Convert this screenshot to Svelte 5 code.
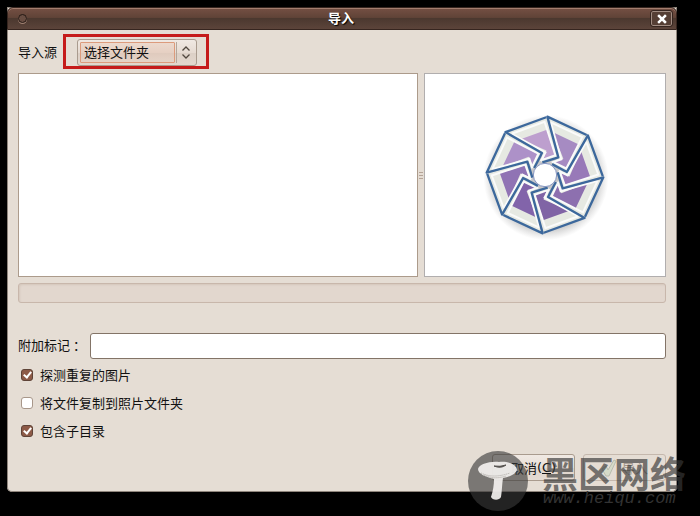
<script lang="ts">
  let source = $state("folder");
  let tags = $state("");
  let options = $state([
    { id: "duplicates", label: "探测重复的图片", checked: true },
    { id: "copy", label: "将文件复制到照片文件夹", checked: false },
    { id: "recurse", label: "包含子目录", checked: true },
  ]);

  // shutter blades, clockwise from the top
  const blades = ["#a68bc2", "#9879b8", "#8d70af", "#8064a5", "#8264aa", "#9073b4", "#ad91c8", "#bd9fce"];
</script>

<main class="screen">
  <section class="window" aria-label="导入">
    <header class="titlebar">
      <span class="dot"></span>
      <h1>导入</h1>
      <button class="close" aria-label="关闭">
        <svg width="10" height="10" viewBox="0 0 10 10" aria-hidden="true">
          <path d="M2 2 L8 8 M8 2 L2 8" stroke="#fff" stroke-width="2.5" stroke-linecap="square" />
        </svg>
      </button>
    </header>

    <div class="content">
      <div class="source">
        <label for="source">导入源</label>
        <div class="highlight">
          <div class="combo">
            <select id="source" bind:value={source}>
              <option value="folder">选择文件夹</option>
            </select>
            <svg width="19" height="21" viewBox="0 0 19 21" aria-hidden="true">
              <path d="M1.5 0 V21" stroke="#b5a699" />
              <path d="M7.5 8.5 L11 5 L14.5 8.5 M7.5 12.5 L11 16 L14.5 12.5" fill="none" stroke="#51483f" stroke-width="1.3" />
            </svg>
          </div>
        </div>
      </div>

      <div class="panes">
        <div class="list"></div>
        <div class="handle"><i></i><i></i><i></i></div>
        <div class="preview">
          <svg width="130" height="130" viewBox="-195 -195 390 390" aria-hidden="true">
            <defs>
              <radialGradient id="shade">
                <stop offset="0.82" stop-color="#777" stop-opacity="0.4" />
                <stop offset="1" stop-color="#999" stop-opacity="0" />
              </radialGradient>
            </defs>
            <circle cx="3" cy="8" r="188" fill="url(#shade)" />
            {#each blades as color, i}
              <g transform="rotate({i * 45})">
                <path d="M7 -175 L125 -120 L67 -9 L21 -33 L40 -53 Z" fill="#e6e9e2" />
                <path d="M24 -128 L100 -92 L62 -20 L28 -36 L55 -49 Z" fill={color} />
                <path d="M17 -158 L112 -114 L64 -20 L28 -37 M17 -158 L49 -47 L20 -38" fill="none" stroke="#fafbfa" stroke-width="6" />
              </g>
            {/each}
            {#each blades as _, i}
              <path
                transform="rotate({i * 45})"
                d="M125 -120 L7 -175 L40 -53 L-8 -38"
                fill="none"
                stroke="#3c689c"
                stroke-width="7"
                stroke-linejoin="round"
              />
            {/each}
            <circle r="35" fill="#fff" stroke="#8393c0" stroke-width="3" />
          </svg>
        </div>
      </div>

      <div class="progress" role="progressbar" aria-label="导入进度"></div>

      <div class="tags">
        <label for="tags">附加标记 ：</label>
        <input id="tags" type="text" bind:value={tags} />
      </div>

      <div class="options">
        {#each options as option (option.id)}
          <label>
            <input type="checkbox" bind:checked={option.checked} />
            <span>{option.label}</span>
          </label>
        {/each}
      </div>

      <footer class="actions">
        <button>取消<span class="key">(<u>C</u>)</span></button>
        <button disabled>
          <svg width="16" height="18" viewBox="0 0 16 18" aria-hidden="true">
            <path d="M1 10 L5 7 L7 11 L13 1 L15 2 L8 17 L5 17 Z" fill="#d5dbc9" stroke="#b9bcae" />
          </svg>
          导入
        </button>
      </footer>
    </div>
  </section>

  <div class="watermark">
    <svg width="60" height="60" viewBox="0 0 60 60" aria-hidden="true">
      <circle cx="30" cy="30" r="30" fill="#393939" fill-opacity="0.62" />
      <path
        d="M10 18 C11 13 22 10 31 11 C41 10 49 14 49 19 C48 23 41 26 35 27 C34 33 34 40 33 46 C31 50 24 49 23 46 C25 40 26 34 26 28 C18 26 10 23 10 18 Z"
        fill="#f3f1ef"
        fill-opacity="0.92"
      />
      <path d="M26 15 Q32 16 38 14 Q33 18 26 15" fill="#55524f" stroke="#55524f" />
      <path d="M13 22 Q25 28 42 22 M16 24 Q26 29 38 25" fill="none" stroke="#aaa6a1" stroke-dasharray="1 1" />
    </svg>
    <div class="site">
      <strong>黑区网络</strong>
      <span>www.heiqu.com</span>
    </div>
  </div>
</main>

<style>
  :global(body) {
    margin: 0;
    background: #000;
  }
  .screen {
    position: relative;
    box-sizing: border-box;
    min-height: 100vh;
    padding: 7px 23px 23px 7px;
    font: 13px/20px "Noto Sans CJK SC", sans-serif;
    color: #111;
  }
  .window {
    background: #e5ddd4;
    border-radius: 0 0 5px 5px;
    box-shadow: inset 0 0 0 1px #8f857c;
  }
  .titlebar {
    display: flex;
    align-items: center;
    box-sizing: border-box;
    height: 23px;
    padding: 0 4px 0 10px;
    border: 1px solid #36251f;
    border-radius: 6px 6px 0 0;
    background: linear-gradient(#755044, #604337 45%, #4b382f 50%, #5c443a);
    box-shadow: inset 0 1px #a37d6e;
  }
  .dot {
    width: 7px;
    height: 7px;
    margin-right: 4px;
    border: 1px solid #241813;
    border-radius: 50%;
    background: #684d42;
    box-shadow: 0 1px #a08172;
  }
  h1 {
    flex: 1;
    margin: 0;
    text-align: center;
    font-size: 13px;
    line-height: 18px;
    padding-bottom: 2px;
    font-weight: 700;
    color: #fff;
    text-shadow: 1px 1px 1px #000;
  }
  .close {
    display: grid;
    place-items: center;
    width: 21px;
    height: 15px;
    padding: 0;
    border: 1px solid #a18c82;
    border-radius: 2px;
    outline: 1px solid #36251f;
    background: #553e34;
  }
  .content {
    padding: 4px 11px 11px;
  }
  .source {
    display: flex;
    align-items: center;
    gap: 6px;
  }
  .highlight {
    padding: 2px 9px 0 11px;
    border: 3px solid #c51b1b;
  }
  .combo {
    display: flex;
    align-items: center;
    box-sizing: border-box;
    width: 120px;
    height: 27px;
    padding: 2px;
    border: 1px solid #a99b8e;
    border-radius: 3px;
    background: linear-gradient(#f0e9e3, #e6dbd2 50%, #dcd0c6 52%, #e3d8ce);
  }
  select {
    appearance: none;
    flex: 1;
    min-width: 0;
    height: 21px;
    padding: 0 3px 2px;
    border: 1px solid #dc9b7c;
    border-radius: 1px;
    background: linear-gradient(#ecd9cd, #e6d0c3 50%, #dfcabd 52%, #e5d3c7);
    font: inherit;
    line-height: 17px;
    color: inherit;
  }
  .panes {
    display: flex;
    height: 204px;
    margin-top: 4px;
  }
  .list {
    flex: 400;
    border: 1px solid #ac9b8b;
    background: #fff;
  }
  .handle {
    display: flex;
    flex-direction: column;
    align-items: center;
    justify-content: center;
    gap: 2px;
    width: 6px;
  }
  .handle i {
    width: 4px;
    height: 1px;
    background: #b5a497;
  }
  .preview {
    display: grid;
    place-items: center;
    flex: 242;
    border: 1px solid #b1aeae;
    background: #fff;
  }
  .progress {
    height: 18px;
    margin-top: 6px;
    border: 1px solid #c8b7ab;
    border-radius: 3px;
    background: #e2d7ce;
    box-shadow: inset 1px 1px 2px #d4c7bc;
  }
  .tags {
    display: flex;
    align-items: center;
    margin-top: 30px;
  }
  .tags label {
    width: 72px;
    padding-bottom: 2px;
    white-space: nowrap;
  }
  .tags input {
    flex: 1;
    box-sizing: border-box;
    min-width: 0;
    height: 26px;
    padding: 0 5px;
    border: 1px solid #837467;
    border-radius: 3px;
    background: #fff;
    font: inherit;
  }
  .options {
    display: flex;
    flex-direction: column;
    align-items: flex-start;
    gap: 8px;
    margin-top: 6px;
    padding-left: 3px;
  }
  .options label {
    display: flex;
    align-items: center;
    gap: 7px;
  }
  .options input {
    appearance: none;
    box-sizing: border-box;
    width: 12px;
    height: 12px;
    margin: 0;
    border: 1px solid #a8978a;
    border-radius: 3px;
    background: #fff;
  }
  .options input:checked {
    border-color: #5e4337;
    background: #8d5a47;
  }
  .options input:checked::before {
    content: "";
    display: block;
    box-sizing: border-box;
    width: 5px;
    height: 8px;
    margin-left: 3px;
    border: solid #fff;
    border-width: 0 2px 2px 0;
    transform: rotate(38deg);
  }
  .actions {
    display: flex;
    justify-content: flex-end;
    gap: 8px;
    margin-top: 13px;
  }
  .actions button {
    display: flex;
    align-items: center;
    justify-content: center;
    box-sizing: border-box;
    width: 83px;
    height: 27px;
    padding: 0;
    border: 1px solid #a99b8e;
    border-radius: 3px;
    background: linear-gradient(#f0e9e3, #e8dfd7 50%, #dfd4ca 52%, #e5dbd2);
    font: inherit;
    color: #111;
  }
  .key {
    font-family: "DejaVu Sans", sans-serif;
  }
  .actions button:disabled {
    gap: 5px;
    border-color: #c5b8ad;
    background: #e5ddd4;
    color: #a2968b;
  }
  .watermark {
    position: absolute;
    right: 14px;
    bottom: 5px;
    display: flex;
    gap: 14px;
    pointer-events: none;
  }
  .site {
    display: flex;
    flex-direction: column;
    padding-top: 3px;
    color: rgba(56, 56, 56, 0.68);
  }
  .site strong {
    font-size: 36px;
    line-height: 36px;
    font-weight: 700;
  }
  .site span {
    padding-left: 1px;
    font: italic 17px/18px "Liberation Mono", monospace;
    color: #333;
  }
</style>
